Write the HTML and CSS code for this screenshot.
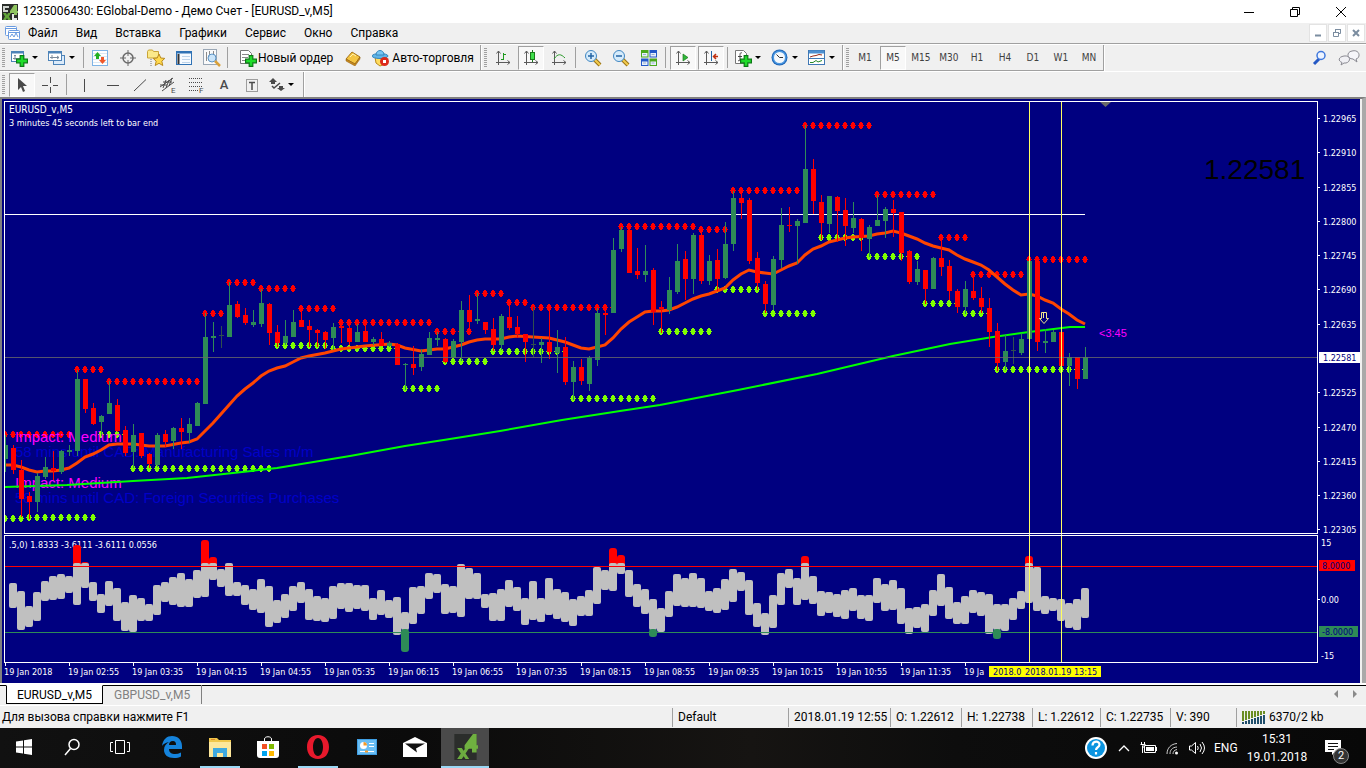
FILE: index.html
```html
<!DOCTYPE html>
<html lang="ru">
<head>
    <meta charset="UTF-8">
    <meta name="viewport" content="width=device-width, initial-scale=1.0">
    <title>1235006430: EGlobal-Demo</title>
    <link rel="stylesheet" href="styles.css">
</head>
<body>
    <svg class="defs" width="0" height="0">
        <defs>
            <symbol id="i-plus" viewBox="0 0 10 10">
                <path d="M3.5 .5h3v3h3v3h-3v3h-3v-3h-3v-3h3z" fill="#1fdc2a" stroke="#0a7a14"/>
            </symbol>
            <symbol id="i-axes" viewBox="0 0 16 16">
                <path d="M3.5 1v14M1 12.5h14M1.5 3.5l2-2.5 2 2.5M12.5 10.500l2.500 2-2.500 2" fill="none" stroke="#5a5a5a"/>
            </symbol>
            <symbol id="i-logo" viewBox="0 0 24 28">
                <rect width="24" height="28" fill="#2b2d2b"/>
                <path d="M3 15h5l2 3 2-3h4l-4 6 4 6h-4l-2-3-2 3H3l4-6z" fill="#6cab3f"/>
                <path d="M20 0h4v12h2v4h-2v4h-5v-4h-8v-4z" fill="#6fb040"/>
            </symbol>
        </defs>
    </svg>

    <div class="app">
        <header class="title-bar">
            <svg class="app-icon" viewBox="0 0 16 16">
                <rect width="16" height="16" fill="#2a2d2a"/>
                <path d="M1 2h6v2H3v2h3v2H1z" fill="#cfd3cf"/>
                <path d="M12 1h3v6h1v2h-1v2h-3V9H8V7z" fill="#8fc45f"/>
                <path d="M1 9h3l1 2 1-2h3l-2 3.500 2 3.500H6l-1-2-1 2H1l2-3.500z" fill="#62a53a"/>
                <path d="M10 10h2v4h3v2h-5z" fill="#e4e8e4"/>
            </svg>
            <h1>1235006430: EGlobal-Demo - Демо Счет - [EURUSD_v,M5]</h1>
            <div class="window-buttons">
                <button aria-label="Свернуть"><svg width="12" height="12"><path d="M1 6.500h10" stroke="#000"/></svg></button>
                <button aria-label="Развернуть"><svg width="12" height="12"><path d="M1.500 3.500h7v7h-7zM3.500 3.500v-2h7v7h-2" fill="none" stroke="#000"/></svg></button>
                <button aria-label="Закрыть"><svg width="12" height="12"><path d="M1 1l10 10M11 1L1 11" stroke="#000"/></svg></button>
            </div>
        </header>

        <nav class="menu-bar">
            <svg class="menu-icon" viewBox="0 0 16 16">
                <rect x="1.500" y="1.500" width="11" height="9" rx="1" fill="#fff" stroke="#6a9be0"/>
                <path d="M2 3.500h10" stroke="#6a9be0"/>
                <rect x="4.500" y="5.500" width="11" height="9" rx="1" fill="#fff" stroke="#6a9be0"/>
                <path d="M5 7.500h10M6 12l2-3 2 3 2-4 2 4" fill="none" stroke="#6a9be0"/>
            </svg>
            <button>Файл</button>
            <button>Вид</button>
            <button>Вставка</button>
            <button>Графики</button>
            <button>Сервис</button>
            <button>Окно</button>
            <button>Справка</button>
            <div class="mdi-buttons">
                <button aria-label="Свернуть окно"><svg width="10" height="10"><path d="M2 7.500h6" stroke="#7b8da0" stroke-width="2"/></svg></button>
                <button aria-label="Восстановить окно"><svg width="10" height="10"><path d="M1.500 4.500h5v4h-5zM3.500 4v-2.500h5v4H7M1 4.500h6M3 1.500h6" fill="none" stroke="#7b8da0"/></svg></button>
                <button aria-label="Закрыть окно"><svg width="10" height="10"><path d="M2 2l6 6M8 2L2 8" stroke="#7b8da0" stroke-width="2"/></svg></button>
            </div>
        </nav>

        <div class="toolbar-row">
            <div class="toolbar standard">
                <span class="grip"></span>
                <button class="tool drop" aria-label="Новый график">
                    <svg width="18" height="18"><rect x=".5" y="2.500" width="12" height="10" fill="#fff" stroke="#4d83b8"/><path d="M1 3.500h12" stroke="#4d83b8" stroke-width="2"/><path d="M4 6v5M2 9.500h8M3 7l1-1 1 1" fill="none" stroke="#7b8b9b"/><use href="#i-plus" x="5" y="6" width="12" height="12"/></svg>
                </button>
                <button class="tool drop" aria-label="Профили">
                    <svg width="18" height="18"><rect x="5.500" y="6.500" width="11" height="9" fill="#dcebfa" stroke="#4d83b8"/><rect x=".5" y="2.500" width="13" height="9" fill="#fff" stroke="#4d83b8"/><path d="M1 3.500h13" stroke="#4d83b8" stroke-width="2"/><path d="M4 6v4M2 8.500h9M9 7l2 1.500L9 10" fill="none" stroke="#7b8b9b"/></svg>
                </button>
                <span class="sep"></span>
                <button class="tool" aria-label="Обзор рынка">
                    <svg width="16" height="16"><rect x=".5" y=".5" width="15" height="15" fill="#fff" stroke="#7fb4e6"/><path d="M1 3.500h14M1 6.500h14M1 9.500h14M1 12.500h14" stroke="#dde8f2"/><path d="M5.500 2L9 6H7v3H4V6H2z" fill="#22b022"/><path d="M10.500 14L7 10h2V7h3v3h2z" fill="#f0582a"/></svg>
                </button>
                <button class="tool" aria-label="Навигатор">
                    <svg width="16" height="16"><circle cx="8" cy="8" r="5" fill="none" stroke="#6a6a6a" stroke-width="1.500"/><path d="M8 0v6M8 10v6M0 8h6M10 8h6" stroke="#6a6a6a"/></svg>
                </button>
                <button class="tool" aria-label="Избранное">
                    <svg width="18" height="18"><path d="M.5 2.500l1-1.500h4l1 1.500h5V9H.5z" fill="#fbe98a" stroke="#c9a437"/><path d="M4 10v7" stroke="#777" stroke-dasharray="1 1"/><path d="M12 5l1.800 4 4 .4-3 2.800 1 4.300-3.800-2.200L8.200 16.500l1-4.300-3-2.800 4-.4z" fill="#ffd94d" stroke="#b98a1c"/></svg>
                </button>
                <button class="tool" aria-label="Терминал">
                    <svg width="16" height="16"><rect x=".5" y="1.500" width="15" height="13" fill="#f5faff" stroke="#2f72b5"/><path d="M1 2.500h14" stroke="#2f72b5" stroke-width="2"/><path d="M2.500 4v10" stroke="#333" stroke-width="2"/><path d="M6 6.500h8M6 9.500h8M6 12.500h8" stroke="#bcd3ea"/></svg>
                </button>
                <button class="tool" aria-label="Тестер стратегий">
                    <svg width="18" height="18"><rect x=".5" y=".5" width="13" height="15" fill="#fafafa" stroke="#9aa7b5"/><path d="M3.500 3v9M6.500 2v6M10.500 2v4" stroke="#8a8a8a"/><circle cx="9" cy="9" r="4" fill="#bfe0fa" fill-opacity=".8" stroke="#5b93c4"/><path d="M12 12l5 5" stroke="#d9a13a" stroke-width="2.500"/></svg>
                </button>
                <span class="sep"></span>
                <button class="tool wide">
                    <svg width="18" height="18"><path d="M1.500 1.500h8l3 3v10h-11z" fill="#fff" stroke="#777"/><path d="M3 5.500h7M3 8.500h6M3 11.500h4" stroke="#888"/><use href="#i-plus" x="6" y="6" width="12" height="12"/></svg>
                    Новый ордер
                </button>
                <button class="tool" aria-label="Редактор">
                    <svg width="16" height="16"><path d="M1 9l6-7 8 5-5 7z" fill="#f4c542" stroke="#a8761a"/><path d="M1 9v2l9 5 5-7V7l-5 7z" fill="#c98a1c" stroke="#8f5f10" stroke-width=".5"/><path d="M5 7l3-3 3 2" fill="none" stroke="#fff2b0"/></svg>
                </button>
                <button class="tool wide auto">
                    <svg width="18" height="18"><path d="M3 8h11l-1 7-5 2-4-3z" fill="#ffdc5e" stroke="#b98a1c"/><ellipse cx="8" cy="7" rx="8" ry="2.500" fill="#5fb4e8" stroke="#3787bd"/><path d="M4 6c0-6 8-6 8 0z" fill="#79c6f2" stroke="#3787bd"/><circle cx="12.500" cy="12.500" r="4.500" fill="#dc2a1a"/><rect x="11" y="11" width="3" height="3" fill="#fff"/></svg>
                    Авто-торговля
                </button>
            </div>
            <div class="toolbar">
                <span class="grip"></span>
                <button class="tool" aria-label="Бары"><svg width="16" height="16"><use href="#i-axes"/><path d="M8.500 3v7M6 9.500h2M9 4.500h2" stroke="#1c9a1c"/></svg></button>
                <button class="tool pressed" aria-label="Свечи"><svg width="16" height="16"><use href="#i-axes"/><path d="M9.500 0v12" stroke="#1c7a1c"/><rect x="7.500" y="2.500" width="4" height="7" fill="#3fe04a" stroke="#1c7a1c"/></svg></button>
                <button class="tool" aria-label="Линия"><svg width="16" height="16"><use href="#i-axes"/><path d="M3 9c4-6 7-5 11-1" fill="none" stroke="#2a9a2a"/></svg></button>
                <span class="sep"></span>
                <button class="tool" aria-label="Увеличить"><svg width="18" height="18"><path d="M10 10l6 6" stroke="#9a7418" stroke-width="4"/><path d="M10 10l6 6" stroke="#f2cb4e" stroke-width="2"/><circle cx="7" cy="7" r="5.500" fill="#d5ebfb" stroke="#3f86c2"/><path d="M4 7h6M7 4v6" stroke="#2465a5" stroke-width="1.500"/></svg></button>
                <button class="tool" aria-label="Уменьшить"><svg width="18" height="18"><path d="M10 10l6 6" stroke="#9a7418" stroke-width="4"/><path d="M10 10l6 6" stroke="#f2cb4e" stroke-width="2"/><circle cx="7" cy="7" r="5.500" fill="#d5ebfb" stroke="#3f86c2"/><path d="M4 7h6" stroke="#2465a5" stroke-width="1.500"/></svg></button>
                <button class="tool" aria-label="Окна рядом"><svg width="16" height="16"><path d="M0 0h7.500v7.500H0zM8.500 8.500H16V16H8.500z" fill="#4aa81c"/><path d="M8.500 0H16v7.500H8.500zM0 8.500h7.500V16H0z" fill="#2459c9"/><path d="M1 3h5.500v3.500H1zM9.500 3H15v3.500H9.500zM1 11.500h5.500V15H1zM9.500 11.500H15V15H9.500z" fill="#e8f0fa"/><path d="M2 4.500h3M10.500 4.500h3M2 13h3M10.500 13h3" stroke="#9ab0d0"/></svg></button>
                <span class="sep"></span>
                <button class="tool pressed" aria-label="Автопрокрутка"><svg width="16" height="16"><use href="#i-axes"/><path d="M8 4l5 3.500L8 11z" fill="#2fb83a" stroke="#1c7a1c" stroke-width=".7"/></svg></button>
                <button class="tool pressed" aria-label="Сдвиг графика"><svg width="16" height="16"><use href="#i-axes"/><path d="M8.500 1v10" stroke="#2465a5"/><path d="M15 6.500h-4M13 4l-2.500 2.500L13 9" fill="none" stroke="#c03010" stroke-width="1.500"/></svg></button>
                <span class="sep"></span>
                <button class="tool drop" aria-label="Индикаторы"><svg width="18" height="18"><path d="M1.500 1.500h8l3 3v10h-11z" fill="#fff" stroke="#777"/><path d="M8 4c-2-1-2 1-2 3v3c0 2-1 2-2 1.500M4 7.500h4" fill="none" stroke="#444"/><use href="#i-plus" x="6" y="6" width="12" height="12"/></svg></button>
                <button class="tool drop" aria-label="Периоды"><svg width="18" height="18"><circle cx="8.500" cy="8.500" r="8" fill="#1e66b8"/><circle cx="8.500" cy="8.500" r="7" fill="#4a97e0"/><circle cx="8.500" cy="8.500" r="5.500" fill="#f4f8fc"/><path d="M5.500 5.500l3 3h3.500" fill="none" stroke="#333"/></svg></button>
                <button class="tool drop" aria-label="Шаблоны"><svg width="18" height="18"><rect x=".5" y="1.500" width="16" height="14" fill="#fff" stroke="#3f78b5"/><path d="M1 3h15" stroke="#4d8fd0" stroke-width="3"/><path d="M1 9.500h15" stroke="#3f78b5"/><path d="M2 8l3-1 3-.5 3-1 3 .5" fill="none" stroke="#9a2a1a"/><path d="M2 13.500h3l3-2 2 1.500 4-1.500" fill="none" stroke="#2a8a2a"/></svg></button>
            </div>
            <div class="toolbar periods">
                <span class="grip"></span>
                <button class="tool">M1</button>
                <button class="tool pressed">M5</button>
                <button class="tool">M15</button>
                <button class="tool">M30</button>
                <button class="tool">H1</button>
                <button class="tool">H4</button>
                <button class="tool">D1</button>
                <button class="tool">W1</button>
                <button class="tool">MN</button>
            </div>
            <div class="toolbar-end">
                <button aria-label="Поиск"><svg width="16" height="16"><path d="M2 14l6-6" stroke="#2458c4" stroke-width="3"/><circle cx="9" cy="5.500" r="4" fill="#eef4ff" stroke="#3f78dd" stroke-width="1.500"/></svg></button>
                <button aria-label="Чат"><svg width="22" height="18"><path d="M14 2c8-2 9 7 4 8l1 3-4-3c-6 0-7-7-1-8z" fill="#f6f6fa" stroke="#8a8a92"/><path d="M6 7c7-1 7 6 2 7h-2l-3 2 1-2.500C0 12 0 8 6 7z" fill="#f0f0f4" stroke="#8a8a92"/></svg></button>
            </div>
        </div>

        <div class="toolbar-row second">
            <div class="toolbar lines">
                <span class="grip"></span>
                <button class="tool pressed" aria-label="Курсор"><svg width="16" height="16"><path d="M4 1v12l3-3 2 5 2-1-2-5h4z" fill="#4a4a4a"/></svg></button>
                <button class="tool" aria-label="Перекрестие"><svg width="16" height="16"><path d="M8.500 0v6M8.500 10v6M0 8.500h6M11 8.500h5" stroke="#4a4a4a"/></svg></button>
                <span class="sep"></span>
                <button class="tool" aria-label="Вертикальная линия"><svg width="16" height="16"><path d="M8.500 2v13" stroke="#4a4a4a"/></svg></button>
                <button class="tool" aria-label="Горизонтальная линия"><svg width="16" height="16"><path d="M3 8.500h12" stroke="#4a4a4a"/></svg></button>
                <button class="tool" aria-label="Трендовая линия"><svg width="16" height="16"><path d="M2 14L14 2.500" stroke="#4a4a4a"/></svg></button>
                <button class="tool" aria-label="Канал"><svg width="18" height="18"><path d="M1 11L14 2M3 15l12-9M4 12l3-8M7 12l3-8M10 10l3-8M1 9h7M4 6h9" stroke="#4a4a4a"/><text x="12" y="17" class="tool-mark">E</text></svg></button>
                <button class="tool" aria-label="Фибоначчи"><svg width="18" height="18"><path d="M2 2.500h14M2 6.500h14M2 10.500h14M2 14.500h9" stroke="#4a4a4a" stroke-dasharray="1 1"/><text x="12" y="17" class="tool-mark">F</text></svg></button>
                <button class="tool letter">A</button>
                <button class="tool" aria-label="Метка"><svg width="16" height="16"><rect x="2.500" y="2.500" width="11" height="12" fill="none" stroke="#4a4a4a" stroke-dasharray="1 1"/><path d="M5 5.500h6M8 5v8" stroke="#4a4a4a" stroke-width="1.500"/></svg></button>
                <button class="tool drop" aria-label="Стрелки"><svg width="16" height="16"><path d="M4 1l4 4H6v2H2V5H0zM12 14l-4-3h2V9h4v2h2z" fill="#4a4a4a"/><path d="M3 9l2 2 6-5" fill="none" stroke="#4a4a4a" stroke-width="1.500"/></svg></button>
            </div>
        </div>

        <main class="chart">
            <svg class="plot" id="plot"></svg>
            <svg class="price-axis" id="priceAxis"></svg>
        </main>

        <nav class="chart-tabs">
            <button class="tab active">EURUSD_v,M5</button>
            <button class="tab">GBPUSD_v,M5</button>
            <div class="tab-scroll">
                <button aria-label="Назад"><svg width="6" height="8"><path d="M5 0v8L1 4z" fill="#8a8a8a"/></svg></button>
                <button aria-label="Вперед"><svg width="6" height="8"><path d="M1 0v8l4-4z" fill="#8a8a8a"/></svg></button>
            </div>
        </nav>

        <footer class="status-bar">
            <span class="hint">Для вызова справки нажмите F1</span>
            <span>Default</span>
            <span>2018.01.19 12:55</span>
            <span>O: 1.22612</span>
            <span>H: 1.22738</span>
            <span>L: 1.22612</span>
            <span>C: 1.22735</span>
            <span>V: 390</span>
            <span class="traffic">
                <svg width="24" height="13"><path d="M1 0v10M4 0v9M7 0v8M10 0v7M13 0v6M16 0v5M19 0v4M22 0v3" stroke="#6b8e23" stroke-width="2"/><path d="M1 11v2M4 10v3M7 9v4M10 8v5M13 7v6M16 6v7M19 5v8M22 4v9" stroke="#1f4e6b" stroke-width="2"/></svg>
                6370/2 kb
            </span>
        </footer>

        <div class="taskbar">
            <div class="task-buttons">
                <button aria-label="Пуск"><svg width="16" height="16"><path d="M0 2.500l7-1v6H0zM8 1.300L16 0v7.500H8zM0 8.500h7v6l-7-1zM8 8.500h8V16l-8-1.300z" fill="#fff"/></svg></button>
                <button aria-label="Поиск Windows"><svg width="18" height="18"><circle cx="11" cy="6.500" r="5" fill="none" stroke="#fff" stroke-width="1.500"/><path d="M7.500 10.500L2 17" stroke="#fff" stroke-width="1.500"/></svg></button>
                <button aria-label="Представление задач"><svg width="20" height="16"><path d="M5.500 1.500h9v13h-9zM3 3.500H.5v9H3M17 3.500h2.500v9H17" fill="none" stroke="#fff"/></svg></button>
                <button class="edge" aria-label="Edge"><svg width="20" height="22"><path d="M0 10C1 3 5 0 10 0c6 0 10 4 10 10v3H7c0 4 3 5 6 5 2 0 4-.5 6-1.500v4c-2 1-4 1.500-7 1.500-6 0-10-3-10-8 0-4 2-6 5-8-4 1-6 2-7 4zM7 9h7c0-3-1-4-3-4-3 0-4 2-4 4z" fill="#1583dc"/></svg></button>
                <button class="open" aria-label="Проводник"><svg width="22" height="20"><path d="M0 1h8l2 2h12v17H0z" fill="#f0c74b"/><path d="M0 5h22v15H0z" fill="#fde79b"/><path d="M4 20v-9h14v9h-4v-4H8v4z" fill="#3fa9e0"/><path d="M2 2.500h4" stroke="#e08a2a"/></svg></button>
                <button aria-label="Магазин"><svg width="22" height="22"><path d="M7.500 6V3c0-3 7-3 7 0v3" fill="none" stroke="#fff"/><path d="M0 5h22v14q0 3-3 3H3q-3 0-3-3z" fill="#fff"/><path d="M5 8h5v5H5z" fill="#f25022"/><path d="M12 8h5v5h-5z" fill="#7fba00"/><path d="M5 15h5v5H5z" fill="#00a4ef"/><path d="M12 15h5v5h-5z" fill="#ffb900"/></svg></button>
                <button class="open opera" aria-label="Opera"><svg width="24" height="24"><path fill-rule="evenodd" d="M12 0C19 0 23 5 23 12s-4 12-11 12S1 19 1 12 5 0 12 0zm0 3c-3 0-5 4-5 9s2 9 5 9 5-4 5-9-2-9-5-9z" fill="#e8192c"/></svg></button>
                <button aria-label="Панель управления"><svg width="20" height="16"><rect width="20" height="16" fill="#3f9fe4"/><rect x="1" y="1" width="18" height="14" fill="#69bdf3"/><circle cx="6.500" cy="6.500" r="3.500" fill="#fff"/><path d="M6.500 6.500V3a3.500 3.500 0 0 1 3.500 3.500z" fill="#f39a2a"/><path d="M12 4.500h5M12 7.500h5M3 12.500h14" stroke="#fff"/><path d="M8 12.500h3" stroke="#f39a2a" stroke-width="2"/></svg></button>
                <button aria-label="Почта"><svg width="24" height="20"><path d="M0 6l12-6 12 6v14H0z" fill="#fff"/><path d="M2 6.500h20l-9 5 1 4z" fill="#111"/></svg></button>
                <button class="current" aria-label="MetaTrader"><svg width="25" height="26"><use href="#i-logo"/></svg></button>
            </div>
            <div class="tray">
                <svg width="24" height="24"><circle cx="12" cy="12" r="11" fill="#fff"/><circle cx="12" cy="12" r="9" fill="#0b94e0"/><path d="M8.500 9.500c0-5 7-5 7-1 0 3-3.500 2.500-3.500 5.500M12 16v2.500" fill="none" stroke="#fff" stroke-width="2.200"/></svg>
                <svg width="16" height="8"><path d="M3 7l5-5 5 5" fill="none" stroke="#fff" stroke-width="1.300"/></svg>
                <svg width="18" height="14"><path d="M4.500 4.500h11v7h-11z" fill="none" stroke="#fff"/><path d="M6 6h8v4H6z" fill="#fff"/><path d="M16.500 6v4M2.500 5v7M1.500 1v2M4.500 1v2M.5 3.500h5M3 4v3" stroke="#fff"/></svg>
                <svg width="14" height="14"><circle cx="10.500" cy="12" r="1.500" fill="#fff"/><path d="M7 13c0-2 1-4 4-4.500M4 13c0-4 2-6.500 7-7M1 13C1 7 5 3 11 2.500" fill="none" stroke="#ccc"/></svg>
                <svg width="18" height="14"><path d="M1.500 5v4h2l4 3.500v-11l-4 3.500z" fill="none" stroke="#fff"/><path d="M9.500 5q1.500 2 0 4M12 3q3 4 0 8M14 1q5 6 0 12" fill="none" stroke="#fff"/></svg>
                <span class="lang">ENG</span>
                <time class="clock"><span>15:31</span><span>19.01.2018</span></time>
                <button class="notify" aria-label="Уведомления"><svg width="16" height="16"><path d="M0 0h16v12h-6l-3 3v-3H0z" fill="#fff"/><path d="M3 3.500h10M3 6.500h10M3 9.500h6" stroke="#111"/></svg><span class="badge">2</span></button>
            </div>
        </div>
    </div>

    <script src="chart.js"></script>
</body>
</html>
```

FILE: styles.css
```css
* {
    box-sizing: border-box;
}
body {
    margin: 0;
    background: #f0f0f0;
    color: #000;
    font-family: Roboto, "Open Sans", sans-serif;
    font-size: 12px;
}
button {
    margin: 0;
    padding: 0;
    border: 0;
    background: none;
    color: inherit;
    font: inherit;
    display: flex;
    align-items: center;
    justify-content: center;
}
svg {
    display: block;
    flex: none;
}
.defs {
    position: absolute;
}
.app {
    display: flex;
    flex-direction: column;
    min-height: 100vh;
}

/* title and menu */
.title-bar {
    display: flex;
    align-items: center;
    height: 23px;
    padding: 0 2px;
    background: #fff;
}
.app-icon {
    width: 16px;
    height: 16px;
    margin-right: 5px;
}
.title-bar h1 {
    margin: 0;
    font-size: 12px;
    font-weight: 400;
    line-height: 23px;
}
.window-buttons {
    display: flex;
    margin-left: auto;
}
.window-buttons button {
    width: 46px;
    height: 20px;
}
.menu-bar {
    display: flex;
    align-items: center;
    height: 21px;
    padding-left: 4px;
    border-bottom: 1px solid #a0a0a0;
}
.menu-icon {
    width: 16px;
    height: 16px;
}
.menu-bar > button {
    padding: 0 9px;
}
.menu-bar > .menu-icon + button {
    padding-left: 8px;
}
.mdi-buttons {
    display: flex;
    gap: 1px;
    margin-left: auto;
    padding-right: 1px;
}
.mdi-buttons button {
    width: 18px;
    height: 18px;
    background: #fff;
    border: 1px solid #e3e3e3;
}

/* toolbars */
.toolbar-row {
    display: flex;
    height: 27px;
    border-top: 1px solid #fff;
}
.toolbar-row.second {
    height: 26px;
}
.toolbar {
    display: flex;
    align-items: center;
    border-right: 1px solid #a0a0a0;
    border-bottom: 1px solid #a0a0a0;
    box-shadow: 1px 1px #fff;
}
.second .toolbar {
    border-bottom: 0;
    box-shadow: 1px 0 #fff;
}
.grip {
    width: 3px;
    height: 20px;
    margin: 0 3px 0 2px;
    background: repeating-linear-gradient(#a0a0a0 0 1px, #f0f0f0 1px 2px);
}
.toolbar + .toolbar .grip {
    margin: 0 2px 0 3px;
}
.sep {
    width: 1px;
    height: 21px;
    margin: 0 3px 0 2px;
    background: #a0a0a0;
}
.standard .sep {
    margin: 0 2px 0 1px;
}
.tool {
    width: 28px;
    height: 24px;
}
.tool.drop {
    width: 37px;
    padding-left: 3px;
    justify-content: flex-start;
}
.tool.drop::after {
    content: "";
    margin-left: 3px;
    border: 3px solid transparent;
    border-top-color: #000;
    border-bottom: 0;
}
.tool.pressed {
    width: 26px;
    margin: 0 1px;
    border: 1px solid #a0a0a0;
    border-right-color: #fff;
    border-bottom-color: #fff;
    background: #f8f8f8;
}
.tool.wide {
    width: auto;
    gap: 1px;
    padding: 0 6px 0 9px;
    white-space: nowrap;
}
.tool.wide.auto {
    gap: 2px;
    padding-left: 5px;
}
.periods {
    color: #404040;
    font-family: "DejaVu Sans Condensed", "DejaVu Sans", sans-serif;
    font-size: 10px;
}
.tool.letter {
    color: #4a4a4a;
    font-size: 13px;
    font-weight: 500;
}
.tool-mark {
    font-size: 8px;
    fill: #4a4a4a;
}
.toolbar-end {
    display: flex;
    align-items: center;
    gap: 10px;
    margin-left: auto;
    padding-right: 6px;
}

/* chart window */
.chart {
    display: flex;
    flex: 1;
    border-top: 2px solid #808080;
    border-left: 2px solid #808080;
    border-right: 4px solid #a9a9a9;
    box-shadow: inset -2px 0 #f0f0f0;
    padding-right: 2px;
}
.plot,
.price-axis {
    height: 584px;
    background: #000080;
    font-family: "DejaVu Sans Condensed", "DejaVu Sans", sans-serif;
    font-size: 9px;
    fill: #fff;
}
.plot {
    flex: 1;
    min-width: 0;
}
.price-axis {
    width: 42px;
}
.symbol {
    font-size: 10px;
}
.news {
    font-family: "Liberation Sans", Arial, sans-serif;
    font-size: 15px;
}
.impact {
    fill: #ff00ff;
}
.event {
    fill: #0000c8;
}
.big-price {
    font-family: "Liberation Sans", Arial, sans-serif;
    font-size: 28px;
    fill: #000;
}
.countdown {
    font-family: "Liberation Sans", Arial, sans-serif;
    font-size: 11px;
    fill: #ff00ff;
}

/* chart tabs */
.chart-tabs {
    display: flex;
    align-items: flex-start;
    height: 22px;
    padding: 2px 8px 0 6px;
    background: linear-gradient(#fff 2px, #000 2px, #000 3px, #f0f0f0 3px);
}
.tab {
    height: 19px;
    padding: 0 11px;
    border-right: 1px solid #808080;
    background: none;
    color: #808080;
}
.tab.active {
    padding: 0 10px;
    border: 1px solid #000;
    border-top-color: #fff;
    background: #fff;
    color: #000;
}
.tab-scroll {
    display: flex;
    gap: 13px;
    margin: 5px 0 0 auto;
}

/* status bar */
.status-bar {
    display: grid;
    grid-template-columns: 1fr 116px 102px 71px 71px 68px 70px 66px 130px;
    align-items: center;
    height: 23px;
    padding: 2px 0 1px;
    border-top: 1px solid #fff;
}
.status-bar span {
    height: 19px;
    padding-left: 5px;
    border-left: 1px solid #a0a0a0;
    line-height: 19px;
    white-space: nowrap;
}
.status-bar .hint {
    padding-left: 2px;
    border-left: 0;
}
.traffic {
    display: flex;
    align-items: center;
    gap: 3px;
}

/* taskbar */
.taskbar {
    display: flex;
    height: 40px;
    background: linear-gradient(90deg, #111, #0b0b0b 30%, #161412 55%, #0d0d0d 70%, #080808);
    color: #fff;
}
.task-buttons {
    display: flex;
}
.task-buttons button {
    width: 48px;
    border-bottom: 2px solid transparent;
}
.task-buttons .edge {
    margin-left: 4px;
}
.task-buttons .open {
    width: 40px;
    margin: 0 4px;
    border-bottom-color: #9bd8f5;
}
.task-buttons .opera {
    margin: 0 5px 0 6px;
}
.task-buttons .current {
    margin-left: 2px;
    background: #4a4a4a;
    border-bottom-color: #9bd8f5;
}
.tray {
    display: flex;
    align-items: center;
    gap: 8px;
    margin-left: auto;
    padding-right: 20px;
}
.lang {
    width: 24px;
}
.clock {
    display: flex;
    flex-direction: column;
    width: 62px;
    line-height: 18px;
    text-align: center;
}
.notify {
    position: relative;
    width: 26px;
    height: 26px;
    margin-left: 4px;
}
.badge {
    position: absolute;
    right: -3px;
    bottom: -3px;
    width: 16px;
    height: 16px;
    border: 1px solid #888;
    border-radius: 50%;
    background: #333;
    font-size: 11px;
    line-height: 14px;
    text-align: center;
}
```

FILE: chart.js
```js
// bars are 8px apart, the first one sits on the left edge of the plot
const STEP = 8;
const barX = i => 5 + STEP * i;

// direction, high, body top, body bottom, low ("d" is a flat dim bar)
const candles = `
g 435 445 459 472,r 445 448 470 474,r 460 470 499 517,r 492 496 502 519,g 473 476 502 512,g 457 467 477 479,
r 451 468 471 480,g 450 451 472 474,g 445 450 452 456,g 370 379 451 456,r 379 379 409 413,r 403 408 424 425,
g 415 416 422 436,g 381 403 414 414,r 399 405 431 432,r 426 430 453 456,g 424 435 452 468,r 433 433 456 458,
r 453 454 464 468,g 433 435 465 467,r 430 434 442 447,g 427 428 441 449,r 418 428 432 449,g 418 424 433 443,
g 402 403 426 426,g 313 337 404 404,g 322 336 338 352,d 326 335 336 348,g 282 305 337 337,r 301 304 317 318,
r 308 315 323 325,g 310 322 325 327,g 289 303 324 327,r 303 304 333 345,r 325 332 343 347,g 320 336 343 345,
g 310 322 337 337,r 309 320 327 327,r 320 326 330 347,r 329 330 333 347,r 331 332 340 349,g 323 327 338 350,
r 320 326 328 343,r 325 328 342 345,g 324 332 342 342,r 324 331 342 342,g 337 339 342 345,r 332 339 346 346,
g 341 343 346 347,r 343 344 365 365,g 363 364 365 390,r 346 364 368 375,g 349 354 367 371,g 332 338 355 355,
g 332 338 340 346,r 338 339 362 363,g 339 341 358 358,g 301 310 342 361,r 295 310 322 331,g 293 319 321 324,
r 322 322 330 334,r 318 329 345 351,g 314 316 345 350,r 303 317 328 330,r 316 327 334 338,r 334 334 342 362,
d 307 344 345 357,g 338 342 345 363,r 308 342 352 359,g 330 347 353 373,r 337 347 382 385,g 361 367 382 400,
r 359 367 381 385,g 356 358 384 391,g 308 313 360 366,r 311 313 315 335,g 238 250 313 313,g 227 230 249 252,
r 228 230 273 273,r 248 271 275 279,g 245 271 275 282,r 268 270 312 325,r 301 307 309 333,g 277 290 310 314,
g 244 261 292 294,r 251 259 279 300,g 233 235 279 294,r 230 235 281 284,g 255 261 281 285,r 249 260 279 291,
g 222 244 278 279,g 191 198 244 251,r 194 198 203 219,r 198 200 261 264,r 252 258 283 290,r 281 284 304 313,
g 256 259 305 310,g 208 225 260 268,r 207 225 226 232,g 219 221 226 264,g 125 169 223 223,r 159 169 201 214,
r 195 202 223 240,g 196 196 224 233,r 196 197 211 242,r 198 210 226 246,g 202 218 228 233,r 218 219 238 251,
g 225 227 239 257,g 195 220 226 226,g 207 209 221 238,r 200 209 213 237,r 212 212 253 261,r 250 251 282 284,
g 261 269 282 285,r 270 270 289 304,g 257 258 289 289,r 237 258 267 276,r 260 266 291 300,r 289 291 307 313,
g 281 289 307 314,r 274 291 298 300,r 287 298 307 313,r 298 308 332 347,r 323 331 363 371,g 334 351 362 370,
d 337 350 351 364,g 333 339 353 355,g 259 261 339 339,r 258 261 342 351,g 329 341 343 353,g 330 332 342 342,
r 332 332 366 366,g 353 357 366 386,r 357 357 379 389,g 347 357 379 379`;

// first bar, last bar, level
const resistance = [
    [0, 8, 434], [9, 12, 369], [13, 24, 381], [25, 27, 313], [28, 31, 282], [32, 36, 288], [37, 41, 308],
    [42, 53, 322], [54, 58, 331], [59, 62, 293], [63, 65, 302], [66, 76, 307], [77, 86, 226], [87, 90, 229],
    [91, 99, 190], [100, 108, 125], [109, 116, 194], [117, 120, 237], [121, 127, 274], [128, 135, 259]
];
const support = [
    [0, 2, 518], [3, 11, 517], [12, 15, 434], [16, 33, 468], [34, 40, 345], [41, 49, 348], [50, 54, 388],
    [55, 60, 361], [61, 70, 351], [71, 81, 398], [82, 88, 331], [89, 94, 289], [95, 101, 313],
    [102, 107, 237], [108, 114, 256], [115, 119, 303], [120, 123, 313], [124, 135, 369]
];

const fastAverage = '5,465 13,465 21,467 29,470 37,472 45,471 53,471 61,470 69,468 77,463 85,457 93,454 101,450 109,445 117,444 133,444 149,446 165,446 181,443 189,442 197,439 205,431 213,423 221,414 229,405 237,396 245,389 253,383 261,376 269,371 277,368 285,366 293,362 301,358 309,356 325,353 341,349 349,348 365,346 389,344 397,345 405,348 421,351 437,349 445,349 453,347 461,345 469,342 477,340 485,339 501,339 509,337 517,336 533,337 549,338 565,342 573,345 581,348 589,349 597,347 605,345 613,338 621,329 629,322 637,317 645,312 653,311 661,311 669,310 677,307 685,303 693,299 701,296 709,294 717,291 725,288 733,280 741,274 749,270 757,272 765,273 773,274 781,270 789,266 797,263 805,255 813,249 821,246 829,242 837,240 845,238 853,237 869,236 877,234 885,233 893,231 901,233 909,236 917,239 925,243 933,246 941,248 949,250 957,255 965,259 973,262 981,265 989,270 997,277 1005,284 1013,290 1021,295 1029,294 1037,296 1045,300 1053,303 1061,309 1069,314 1077,320 1085,324';
const slowAverage = '5,487 67,485 133,481 187,478 233,473 277,468 350,456 405,446 450,439 500,431 562,420 620,411 660,405 738,390 817,374 893,356 950,344 993,337 1029,332 1070,327 1085,327';

// oscillator columns starting with bar 1: top, bottom, optional coloured end beyond the level
const columns = `
53 78,61 100,76 97,62 91,51 71,46 70,44 69,46 63,33 75 15,33 58 32,52 71,64 83,51 76,58 91,72 101,65 102,68 91,74 91,
55 85,52 72,47 75,43 77,49 77,40 68,33 67 10,33 50 27,39 57,33 66,52 66,55 75,59 80,49 83,56 97,70 93,64 88,56 81,
52 73,59 90,66 91,68 92,56 89,53 79,53 82,55 79,55 81,68 90,60 85,70 88,67 105,82 100 122,57 94,56 84,43 69,44 63,
54 84,56 83,34 87,38 69,43 69,64 78,63 91,59 91,50 77,57 81,68 95,51 90,68 92,48 85,59 89,62 92,69 96,66 86,60 86,
37 74,40 60,33 61 18,33 44 25,40 67,54 77,59 84,69 100 107,78 102,61 87,44 76,48 77,43 77,48 78,61 81,58 83,49 80,
39 72,42 61,50 85,73 97,83 105,65 98,43 75,39 58,48 75,33 70 26,46 74,61 86,62 83,64 87,60 89,58 81,65 89,65 91,
48 73,54 81,50 80,58 94,78 104,77 98,74 102,60 86,44 76,57 89,72 94,66 94,60 83,62 86,64 104,74 100 109,74 101,
68 90,61 79,33 73 26,37 81,66 84,68 81,69 91,73 98,69 100,58 88`;

const times = ['2018', '02:55', '03:35', '04:15', '04:55', '05:35', '06:15', '06:55', '07:35', '08:15',
    '08:55', '09:35', '10:15', '10:55', '11:35', ''];

const prices = [
    ['1.22965', 118], ['1.22910', 152], ['1.22855', 187], ['1.22800', 221], ['1.22745', 255], ['1.22690', 289],
    ['1.22635', 324], ['1.22525', 392], ['1.22470', 427], ['1.22415', 461], ['1.22360', 495], ['1.22305', 529]
];

const fill = { g: '#2e8b57', r: '#ff0000', d: '#2f4f4f' };

function parse(text) {
    return text.trim().split(/,\s*/).map(row => row.split(' '));
}

function drawCandles() {
    return parse(candles).map(([dir, high, top, bottom, low], i) => {
        const x = barX(i);
        return `<g fill="${fill[dir]}">
            <rect x="${x}" y="${high}" width="1" height="${low - high}"/>
            <rect x="${x - 2}" y="${top}" width="5" height="${bottom - top}"/>
        </g>`;
    }).join('');
}

function drawDots(rows, color) {
    let d = '';
    rows.forEach(([from, to, y]) => {
        for (let i = from; i <= to; i++) {
            d += `M${barX(i) - 3} ${y}h1v-2h1v-1h2v1h1v2h1v1h-1v2h-1v1h-2v-1h-1v-2h-1z`;
        }
    });
    return `<path d="${d}" fill="${color}"/>`;
}

function drawColumns() {
    const ends = [];
    const body = parse(columns).map(([top, bottom, end], n) => {
        const x = barX(n + 1) - 4;
        if (end) {
            const up = +end < +top;
            const y = up ? +end : 99;
            const h = up ? top - end + 6 : end - 99;
            ends.push([up, `<rect x="${x}" y="${530 + y}" width="8" height="${h}" rx="3" fill="${up ? '#ff0000' : '#2e8b57'}"/>`]);
        }
        return `<rect x="${x}" y="${530 + +top}" width="8" height="${bottom - top}" rx="2" fill="#c0c0c0"/>`;
    }).join('');
    const pick = up => ends.filter(e => e[0] === up).map(e => e[1]).join('');
    return pick(true) + body + pick(false);
}

function drawTimes() {
    return times.map((t, i) => {
        const x = 5 + 64 * i;
        return `<rect x="${x}" y="663" width="1" height="3"/><text x="${x - 1}" y="675">${t ? '19 Jan ' + t : '19 Ja'}</text>`;
    }).join('');
}

// drawings use window coordinates, the plot starts at 2,99
document.getElementById('plot').innerHTML = `
<g transform="translate(-2 -99)">
    <clipPath id="area"><rect x="5" y="102" width="3000" height="560"/></clipPath>
    <g clip-path="url(#area)">
        <rect x="5" y="214" width="1080" height="1"/>
        ${drawDots(resistance, '#ff0000')}
        ${drawDots(support, '#7fff00')}
        <g class="news">
            <text class="impact" x="15" y="442">Impact: Medium</text>
            <text class="event" x="15" y="457">58 mins until CAD: Manufacturing Sales m/m</text>
            <text class="impact" x="15" y="488">Impact: Medium</text>
            <text class="event" x="15" y="503">58 mins until CAD: Foreign Securities Purchases</text>
        </g>
        <polyline points="${slowAverage}" fill="none" stroke="#00ff00" stroke-width="2"/>
        <polyline points="${fastAverage}" fill="none" stroke="#ff4500" stroke-width="3"/>
        ${drawCandles()}
        <rect x="5" y="357" width="3000" height="1" fill="#696969" fill-opacity=".8"/>
        <text x="9" y="548">.5,0) 1.8333 -3.6111 -3.6111 0.0556</text>
        ${drawColumns()}
        <rect x="5" y="566" width="3000" height="1" fill="#ff0000"/>
        <rect x="5" y="632" width="3000" height="1" fill="#2e8b57"/>
        <path d="M1029.500 102v560M1061.500 102v560" stroke="#ffff60"/>
        <path d="M1100 102h11l-5.500 5z" fill="#696969"/>
        <path d="M1041.500 312.500h5v6h2l-4.500 5-4.500-5h2zM1043.500 312v6" fill="none" stroke="#f0e68c"/>
    </g>
    <text class="symbol" x="9" y="113">EURUSD_v,M5</text>
    <text x="9" y="126">3 minutes 45 seconds left to bar end</text>
    <text class="big-price" x="1204" y="179">1.22581</text>
    <text class="countdown" x="1099" y="337">&lt;3:45</text>
    ${drawTimes()}
    <rect x="989" y="666" width="112" height="11" fill="#ffff00"/>
    <text x="993" y="675" fill="#000080">2018.0</text>
    <text x="1025" y="675" fill="#000080">2018.01.19 13:15</text>
</g>
<path d="M2.500 2v433M2.500 436v128" stroke="#fff"/>
<rect x="2" y="2" width="100%" height="1"/>
<rect x="2" y="434" width="100%" height="1"/>
<rect x="2" y="436" width="100%" height="1"/>
<rect x="2" y="563" width="100%" height="1"/>
<svg x="100%" overflow="visible"><path d="M-.5 2v433M-.5 436v128" stroke="#fff"/></svg>`;

document.getElementById('priceAxis').innerHTML = `
<g transform="translate(-1318 -99)">
    ${prices.map(([p, y]) => `<rect x="1318" y="${y}" width="2" height="1"/><text x="1323" y="${y + 4}">${p}</text>`).join('')}
    <rect x="1319" y="352" width="41" height="11"/>
    <text x="1323" y="361" fill="#000080">1.22581</text>
    <rect x="1318" y="599" width="2" height="1"/>
    <text x="1321" y="546">15</text>
    <text x="1321" y="603">0.00</text>
    <text x="1321" y="659">-15</text>
    <rect x="1319" y="560" width="36" height="11" fill="#ff0000"/>
    <text x="1322" y="569" fill="#000080">8.0000</text>
    <rect x="1319" y="626" width="39" height="11" fill="#2e8b57"/>
    <text x="1322" y="635" fill="#000080">-8.0000</text>
</g>`;
```
